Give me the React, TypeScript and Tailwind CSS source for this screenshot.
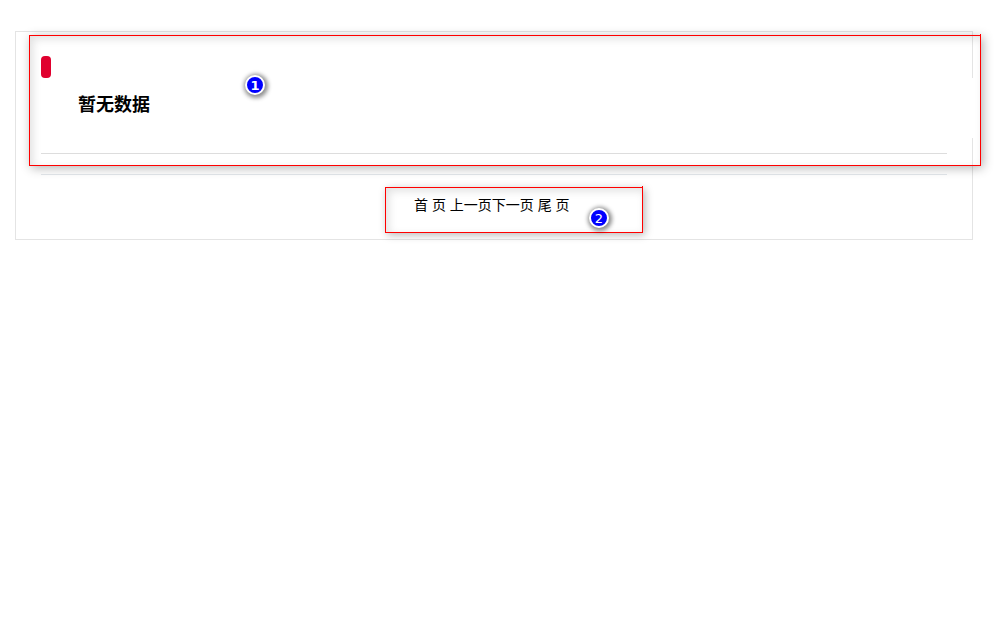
function Badge({ n, className }: { n: number; className: string }) {
  return (
    <div
      className={`absolute flex h-[20px] w-[20px] items-center justify-center rounded-full border-[2px] border-white bg-[#0000ff] text-[13px] leading-none text-white shadow-[1px_1px_4px_2px_rgba(0,0,0,0.45)] ${n === 1 ? "font-bold" : "font-normal"} ${className}`}
      style={{ fontFamily: '"DejaVu Sans", sans-serif' }}
    >
      {n}
    </div>
  );
}

export default function App() {
  return (
    <div
      className="relative min-h-[624px] bg-white pl-[15px] pt-[31px] text-black"
      style={{ fontFamily: '"Liberation Sans", "Noto Sans CJK SC", sans-serif' }}
    >
      <div className="relative flex h-[209px] w-[958px] flex-col border border-[#e4e4e4] px-[25px] pt-[24px]">
        <div className="h-[22px] w-[10px] rounded-[4px] bg-[#e0002e]" />
        <div className="mt-[15px] h-[24px] pl-[37px] text-[18px] font-bold leading-[24px]">暂无数据</div>
        <div className="mt-[36px] border-t border-[#dddddd]" />
        <div className="mt-[20px] border-t border-[#e4e8ec]" />
        <div className="mt-[20px] whitespace-pre pl-[373px] text-[14px] leading-[20px]">首 页 上一页下一页 尾 页</div>

        {/* gap in the frame's right edge */}
        <div className="absolute right-[-1px] top-[46px] h-[60px] w-px bg-white" />

        {/* highlight 1 */}
        <div className="absolute left-[13px] top-[3px] h-[131px] w-[952px] border border-[#ff0000] shadow-[2px_2px_10px_rgba(0,0,0,0.3),inset_3px_3px_8px_rgba(0,0,0,0.12)]">
          <div className="absolute right-[-1px] top-[-2px] h-px w-px bg-[#ff0000]" />
        </div>
        {/* highlight 2 */}
        <div className="absolute left-[369px] top-[155px] h-[46px] w-[258px] border border-[#ff0000] shadow-[2px_2px_8px_rgba(0,0,0,0.28),inset_3px_3px_8px_rgba(0,0,0,0.12)]">
          <div className="absolute right-[-1px] top-[-2px] h-px w-px bg-[#ff0000]" />
        </div>

        <Badge n={1} className="left-[229px] top-[43px]" />
        <Badge n={2} className="left-[573px] top-[176px]" />
      </div>
    </div>
  );
}
